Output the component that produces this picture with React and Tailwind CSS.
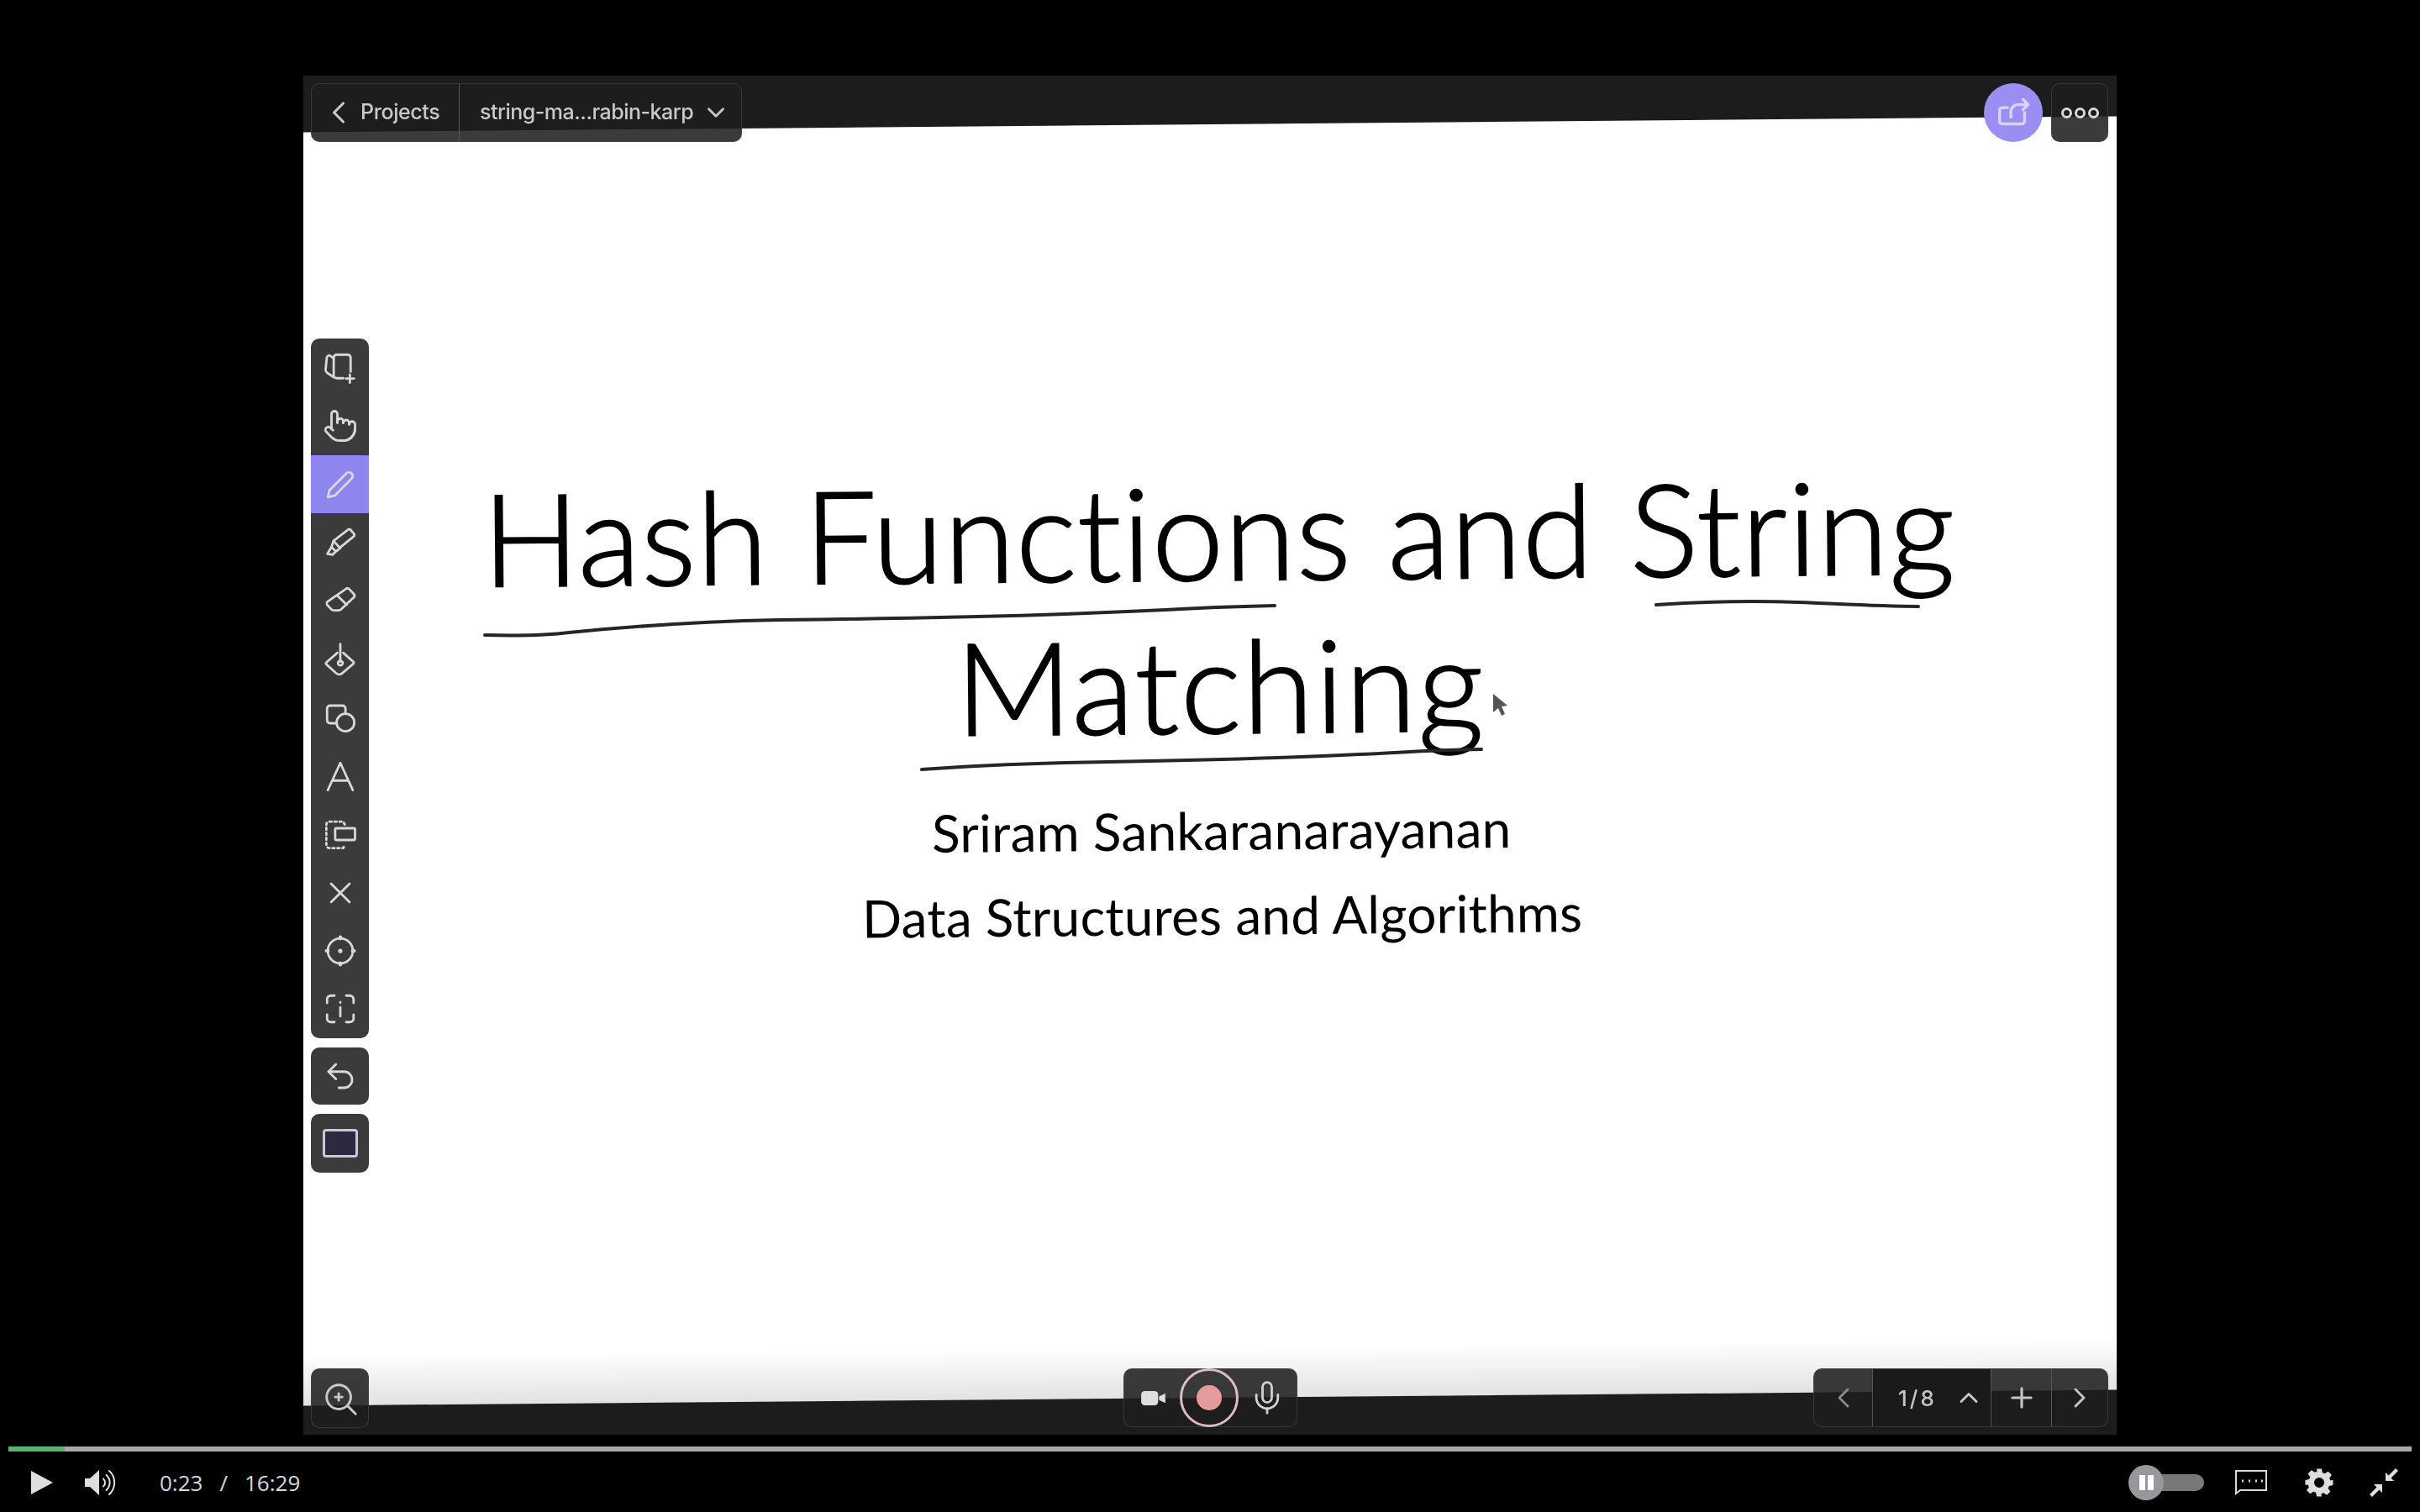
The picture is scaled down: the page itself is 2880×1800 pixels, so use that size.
import { ChevronLeft, ChevronDown, ChevronRight, ChevronUp, Plus, Pointer, X, Undo2, Mic } from 'lucide-react'

const TOOL_ICON = 'w-[42px] h-[42px] fill-none stroke-[#d8d8d8] stroke-[1.6]'

function Svg({ children, className = TOOL_ICON }) {
  return (
    <svg viewBox="0 0 24 24" strokeLinecap="round" strokeLinejoin="round" className={className}>
      {children}
    </svg>
  )
}

const PagesIcon = () => (
  <Svg>
    <path d="M9.500 3h7.500a2 2 0 0 1 2 2v9.500M9.500 3a2 2 0 0 0-2 2v12a2 2 0 0 0 2 2h4.500" />
    <path d="M7.500 5.500 5.200 3.800a1.600 1.600 0 0 0-2.400 1L2 13a2.500 2.500 0 0 0 1 2.300l4.500 3" />
    <path d="M18.500 16.500v5.500M15.800 19.200h5.500" />
  </Svg>
)
const HandIcon = () => <Pointer size={42} strokeWidth={1.6} color="#d8d8d8" />
const PenIcon = () => (
  <Svg>
    <path d="M3.500 20.500 4.600 15.800 16.300 4.200a2.200 2.200 0 0 1 3.100 0l.4.4a2.200 2.200 0 0 1 0 3.100L8.200 19.400z" />
  </Svg>
)
const MarkerIcon = () => (
  <Svg>
    <path d="M17.200 3.200a1.200 1.200 0 0 1 1.700 0l2.400 2.900a1.200 1.200 0 0 1-.2 1.700l-9.500 7.700-4.200-4.700z" />
    <path d="M7.400 10.800 6 15l-2.800 4.600 3.600.6 2-2 3.200-2.600M6 15l3 3" />
  </Svg>
)
const EraserIcon = () => (
  <Svg>
    <path d="M15.600 4.200a1.800 1.800 0 0 1 2.500 0l3 3.200a1.800 1.800 0 0 1 0 2.500l-8.500 8a2.500 2.500 0 0 1-1.700.7H7.400a2 2 0 0 1-1.400-.6l-2.700-2.800a1.800 1.800 0 0 1 .1-2.600z" />
    <path d="m10.200 8.800 6.200 6" />
  </Svg>
)
const FillIcon = () => (
  <Svg>
    <path d="M12 1.500v12" />
    <circle cx="12" cy="14.500" r="1.600" />
    <path d="M10 7.500 2.600 14a1 1 0 0 0 0 1.400l6.600 6a3 3 0 0 0 4 .1l7.600-6.500a1 1 0 0 0 0-1.400L14 7.500" />
  </Svg>
)
const ShapesIcon = () => (
  <Svg>
    <path d="M15.500 8.500V6a2 2 0 0 0-2-2H5a2 2 0 0 0-2 2v8a2 2 0 0 0 2 2h4" />
    <circle cx="15.500" cy="15.500" r="6" />
  </Svg>
)
const TextIcon = () => (
  <Svg>
    <path d="M3.500 21.500 12 3l8.500 18.500M6.500 15h11" />
  </Svg>
)
const SelectIcon = () => (
  <Svg>
    <path d="M15 5.500 14 3.500H4.500a2 2 0 0 0-2 2v14a2 2 0 0 0 2 2H14l1-2" strokeDasharray="1.400 2" />
    <rect x="8.500" y="8" width="13.500" height="8" rx="0.800" />
  </Svg>
)
const LaserIcon = () => <X size={44} strokeWidth={1.5} color="#d8d8d8" />
const TargetIcon = () => (
  <Svg>
    <circle cx="12" cy="12" r="8.500" />
    <circle cx="12" cy="12" r="0.700" fill="#d8d8d8" />
    <path d="M12 2.600v1M12 20.400v1M2.600 12h1M20.400 12h1" strokeWidth="2.400" />
  </Svg>
)
const CaptureIcon = () => (
  <Svg>
    <path d="M8 3H5.500A2.500 2.500 0 0 0 3 5.500V8M16 3h2.500A2.500 2.500 0 0 1 21 5.500V8M8 21H5.500A2.500 2.500 0 0 1 3 18.500V16M16 21h2.500a2.500 2.500 0 0 0 2.500-2.500V16" />
    <path d="M12 11v6M12 7.500v.2" />
  </Svg>
)

const TOOLS = [
  { id: 'pages', Icon: PagesIcon },
  { id: 'hand', Icon: HandIcon },
  { id: 'pen', Icon: PenIcon, active: true },
  { id: 'marker', Icon: MarkerIcon },
  { id: 'eraser', Icon: EraserIcon },
  { id: 'fill', Icon: FillIcon },
  { id: 'shapes', Icon: ShapesIcon },
  { id: 'text', Icon: TextIcon },
  { id: 'select', Icon: SelectIcon },
  { id: 'laser', Icon: LaserIcon },
  { id: 'target', Icon: TargetIcon },
  { id: 'capture', Icon: CaptureIcon },
]

const GLASS = 'bg-[#1e1e1e]/[0.87] border border-[#4a4a4a]/60 rounded-[10px]'

function LeftTools() {
  return (
    <div className="absolute left-[9px] top-[313px] w-[69px] flex flex-col gap-[11px]">
      <div className="h-[833px] flex flex-col rounded-[10px] overflow-hidden bg-[#1e1e1e]/[0.87]">
        {TOOLS.map(({ id, Icon, active }) => (
          <div key={id} className={`flex-1 flex items-center justify-center ${active ? 'bg-[#8e85ee]' : ''}`}>
            <Icon />
          </div>
        ))}
      </div>
      <div className="h-[68px] flex items-center justify-center rounded-[10px] bg-[#1e1e1e]/[0.87]">
        <Undo2 size={42} strokeWidth={1.6} color="#d8d8d8" />
      </div>
      <div className="h-[70px] flex items-center justify-center rounded-[10px] bg-[#1e1e1e]/[0.87]">
        <div className="w-[42px] h-[34px] rounded-[4px] border-[3px] border-[#c9c9d6] bg-[#2c2a40]" />
      </div>
    </div>
  )
}

function TopLeftBar() {
  return (
    <div className={`absolute left-[9px] top-[9px] w-[513px] h-[70px] flex items-center text-[#c9c9c9] text-[25px] font-medium font-['Inter',sans-serif] ${GLASS}`}>
      <div className="w-[176px] h-full flex items-center border-r border-[#555] pl-[10px] gap-[4px]">
        <ChevronLeft size={44} strokeWidth={1.7} />
        <span className="tracking-[-0.4px]">Projects</span>
      </div>
      <div className="flex-1 flex items-center pl-[24px] gap-[10px]">
        <span className="tracking-[-0.5px]">string-ma...rabin-karp</span>
        <ChevronDown size={34} strokeWidth={2} />
      </div>
    </div>
  )
}

function TopRight() {
  return (
    <div className="absolute right-[10px] top-[9px] flex items-center gap-[10px]">
      <div className="w-[70px] h-[70px] rounded-full bg-[#9b8ef2] flex items-center justify-center">
        <svg viewBox="0 0 24 24" className="w-[46px] h-[46px] fill-none stroke-[#d8d2fb] stroke-[1.8]" strokeLinecap="round" strokeLinejoin="round">
          <path d="M8.500 9H5a1.500 1.500 0 0 0-1.500 1.500v7A1.500 1.500 0 0 0 5 19h12.500a1.500 1.500 0 0 0 1.500-1.500V12" />
          <path d="M10.500 15v-3.500A4.500 4.500 0 0 1 15 7h6M18 3.800 21.200 7 18 10.200" />
        </svg>
      </div>
      <div className={`w-[68px] h-[70px] flex items-center justify-center gap-[3px] ${GLASS}`}>
        <span className="w-[13px] h-[13px] rounded-full border-[3px] border-[#d8d8d8]" />
        <span className="w-[13px] h-[13px] rounded-full border-[3px] border-[#d8d8d8]" />
        <span className="w-[13px] h-[13px] rounded-full border-[3px] border-[#d8d8d8]" />
      </div>
    </div>
  )
}

function ZoomButton() {
  return (
    <div className={`absolute left-[9px] bottom-[8px] w-[69px] h-[71px] flex items-center justify-center ${GLASS}`}>
      <svg viewBox="0 0 24 24" className="w-[46px] h-[46px] fill-none stroke-[#c9c9c9] stroke-[1.5]" strokeLinecap="round">
        <circle cx="11" cy="11" r="7.500" />
        <path d="m16.500 16.500 5 5M11 8.800v4.400M8.800 11h4.400" />
      </svg>
    </div>
  )
}

function RecordBar() {
  return (
    <div className={`absolute left-[976px] bottom-[9px] w-[207px] h-[70px] flex items-center ${GLASS}`}>
      <svg viewBox="0 0 28 16" className="ml-[20px] w-[30px] h-[17px] fill-[#dedede]">
        <rect x="0" y="0" width="19" height="16" rx="4" />
        <path d="M20 6 27 2.500v11L20 10z" />
      </svg>
      <div className="ml-[16px] w-[70px] h-[70px] rounded-full border-[3px] border-[#dcbcc6] flex items-center justify-center">
        <span className="w-[30px] h-[30px] rounded-full bg-[#e59b9b]" />
      </div>
      <Mic size={44} strokeWidth={1.5} color="#d2d2d2" className="ml-[12px]" />
    </div>
  )
}

function PageBar() {
  return (
    <div className={`absolute right-[10px] bottom-[9px] w-[351px] h-[70px] flex items-center text-[#c4c4c4] font-['Inter',sans-serif] ${GLASS}`}>
      <div className="w-[70px] h-full flex items-center justify-center border-r border-[#555]">
        <ChevronLeft size={40} strokeWidth={1.7} color="#8a8a8a" />
      </div>
      <div className="w-[141px] h-full flex items-center border-r border-[#555] bg-[#1a1a1a] pl-[30px] gap-[20px]">
        <span className="text-[26px] font-medium tracking-[3px]">1/8</span>
        <ChevronUp size={36} strokeWidth={2} />
      </div>
      <div className="w-[72px] h-full flex items-center justify-center border-r border-[#555]">
        <Plus size={38} strokeWidth={2} />
      </div>
      <div className="flex-1 h-full flex items-center justify-center">
        <ChevronRight size={40} strokeWidth={1.7} />
      </div>
    </div>
  )
}

function Slide() {
  return (
    <div className="w-[2240px] h-[1516px] shrink-0 -rotate-[0.5deg] bg-gradient-to-b from-white from-[96%] to-[#e2e2e2] flex flex-col items-center pt-[393px] pl-[26px] text-black font-['Lato',sans-serif]">
      <h1 className="text-[153px] leading-[182px] font-light text-center tracking-[1.1px] [-webkit-text-stroke:2px_black]">
        Hash Functions and String
        <br />
        <span className="tracking-[2px]">Matching</span>
      </h1>
      <p className="mt-[33px] text-[62px] leading-[101px] tracking-[0.25px]">Sriram Sankaranarayanan</p>
      <p className="text-[62px] leading-[101px] tracking-[0.25px]">Data Structures and Algorithms</p>
    </div>
  )
}

function VideoFrame() {
  return (
    <div className="relative mt-[90px] mx-auto w-[2158px] h-[1618px] bg-[#1c1c1c] overflow-hidden flex justify-center items-center pt-[14px] blur-[0.7px]">
      <Slide />
      {/* pen strokes + cursor, drawn on top of the recording */}
      <svg viewBox="0 0 2158 1618" className="absolute inset-0 w-full h-full fill-none stroke-[#262626] stroke-[4]" strokeLinecap="round">
        <path d="M216 666c40 1 70 1 100-3 80-8 150-13 250-15 180-2 340-6 460-12 50-3 85-4 130-5" />
        <path d="M1610 630c60-4 120-5 170-3 50 2 95 5 142 5" />
        <path d="M736 826c40-3 90-6 170-8 120-2 260-5 350-10 50-2 80-5 146-6" />
        <path d="M1416 736v22l6-5 4 9 4-2-4-9 7-1z" className="fill-[#555] stroke-none" />
      </svg>
      <TopLeftBar />
      <TopRight />
      <LeftTools />
      <ZoomButton />
      <RecordBar />
      <PageBar />
    </div>
  )
}

function ControlBar() {
  return (
    <div className="flex-1 flex flex-col">
      <div className="mt-[14px] mx-[10px] h-[6px] bg-[#a9a9a9]">
        <div className="h-full w-[67px] bg-[#5cb270]" />
      </div>
      <div className="flex-1 flex items-center text-[#d8d8d8] pt-[2px]">
        <svg viewBox="0 0 26 28" className="ml-[37px] w-[26px] h-[28px] fill-[#dedede]">
          <path d="M0 0 26 14 0 28z" />
        </svg>
        <svg viewBox="0 0 38 32" className="ml-[38px] w-[38px] h-[32px] fill-none stroke-[#dedede] stroke-[2]" strokeLinecap="round">
          <path d="M0 11h6l11-10v30L6 21H0z" fill="#dedede" stroke="none" />
          <path d="M22 11.500a6 6 0 0 1 0 9M25.500 7a12 12 0 0 1 0 18M29 2a19 19 0 0 1 0 28" />
        </svg>
        <div className="ml-[51px] flex gap-[20px] text-[26px] font-normal font-['Open_Sans',sans-serif]">
          <span>0:23</span>
          <span>/</span>
          <span>16:29</span>
        </div>
        <div className="ml-auto relative w-[90px] h-[42px] flex items-center">
          <div className="ml-[20px] w-[70px] h-[20px] rounded-full bg-[#787878]" />
          <div className="absolute left-0 top-0 w-[42px] h-[42px] rounded-full bg-[#98989c] flex items-center justify-center gap-[3px]">
            <span className="w-[7px] h-[18px] bg-white" />
            <span className="w-[7px] h-[18px] bg-white" />
          </div>
        </div>
        <svg viewBox="0 0 40 30" className="ml-[36px] w-[40px] h-[30px] fill-none stroke-[#d8d8d8] stroke-[2]">
          <path d="M2 1h36v23H7l-5 4z" />
          <path d="M9 13h2M17 13h2M25 13h2M32 13h2" strokeWidth="3" />
        </svg>
        <svg viewBox="0 0 24 24" className="ml-[43px] w-[36px] h-[36px] fill-[#dedede]">
          <path fillRule="evenodd" d="M10 1h4l.6 3.100 1.900.8 2.600-1.800 2.800 2.800-1.800 2.600.8 1.900L23 10v4l-3.100.6-.8 1.900 1.800 2.600-2.800 2.800-2.600-1.800-1.900.8L14 23h-4l-.6-3.100-1.900-.8-2.600 1.800-2.800-2.800 1.800-2.600-.8-1.900L1 14v-4l3.100-.6.8-1.900-1.800-2.600 2.800-2.800 2.600 1.800 1.900-.8zM12 8a4 4 0 1 0 0 8 4 4 0 0 0 0-8z" />
        </svg>
        <svg viewBox="0 0 36 36" className="ml-[41px] mr-[25px] w-[36px] h-[36px] fill-[#dedede]">
          <path d="M20 16V6l3.500 3.500L32 1l3 3-8.500 8.500L30 16zM16 20v10l-3.500-3.500L4 35l-3-3 8.500-8.500L6 20z" />
        </svg>
      </div>
    </div>
  )
}

export default function App() {
  return (
    <div className="w-[2880px] h-[1800px] bg-black flex flex-col overflow-hidden">
      <VideoFrame />
      <ControlBar />
    </div>
  )
}
